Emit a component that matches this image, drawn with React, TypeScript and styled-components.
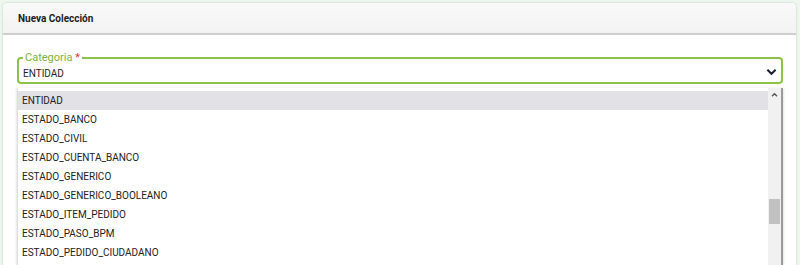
import styled, { createGlobalStyle } from 'styled-components';

const items = [
  'ENTIDAD',
  'ESTADO_BANCO',
  'ESTADO_CIVIL',
  'ESTADO_CUENTA_BANCO',
  'ESTADO_GENERICO',
  'ESTADO_GENERICO_BOOLEANO',
  'ESTADO_ITEM_PEDIDO',
  'ESTADO_PASO_BPM',
  'ESTADO_PEDIDO_CIUDADANO',
];

const App: React.FC = () => {
  return (
    <>
      <GlobalStyle />
      <Page>
        <Card>
          <Header>Nueva Colección</Header>
          <Body>
            <Field>
              <Legend>
                Categoria <Required>*</Required>
              </Legend>
              <Value>ENTIDAD</Value>
              <Chevron viewBox="0 0 12 8">
                <path d="M1.5 1.5 L6 6 L10.5 1.5" />
              </Chevron>
            </Field>
            <Menu>
              <Options>
                {items.map((item, i) => (
                  <Option key={item} selected={i === 0}>
                    {item}
                  </Option>
                ))}
              </Options>
              <Scrollbar>
                <ArrowUp viewBox="0 0 8 6">
                  <path d="M1 5 L4 2 L7 5" />
                </ArrowUp>
                <Thumb />
              </Scrollbar>
            </Menu>
          </Body>
        </Card>
      </Page>
    </>
  );
};

export default App;

const GlobalStyle = createGlobalStyle`
  html, body {
    margin: 0;
    padding: 0;
    background: #eef7ee;
    font-family: Roboto, "Liberation Sans", sans-serif;
  }
`;

const Page = styled.div`
  height: 265px;
  padding: 3px 4px 0 3px;
  box-sizing: border-box;
  overflow: hidden;
`;

const Card = styled.div`
  background: #ffffff;
  border-radius: 4px 4px 0 0;
  box-shadow: 0 0 2px rgba(0, 0, 0, 0.25);
  height: 262px;
  overflow: hidden;
  display: flex;
  flex-direction: column;
`;

const Header = styled.div`
  height: 30px;
  flex: none;
  display: flex;
  align-items: center;
  padding-left: 15px;
  background: linear-gradient(#f9f9f9, #f3f3f3);
  border-bottom: 2px solid #cfcfcf;
  font-size: 10px;
  font-weight: 700;
  color: #1c1c1c;
`;

const Body = styled.div`
  flex: 1;
  padding: 22px 13px 0 14px;
  display: flex;
  flex-direction: column;
`;

const Field = styled.div`
  position: relative;
  height: 27px;
  flex: none;
  border: 2px solid #8bc34a;
  border-radius: 4px;
  display: flex;
  align-items: center;
  padding: 0 4px 0 4px;
  box-sizing: border-box;
`;

const Legend = styled.span`
  position: absolute;
  top: -8px;
  left: 4px;
  padding: 0 2px;
  background: #ffffff;
  font-size: 11px;
  line-height: 14px;
  color: #7cb342;
`;

const Required = styled.span`
  color: #e53935;
`;

const Value = styled.span`
  flex: 1;
  font-size: 10px;
  color: #1f1f1f;
  padding-top: 5px;
`;

const Chevron = styled.svg`
  width: 11px;
  height: 8px;
  fill: none;
  stroke: #1a2330;
  stroke-width: 2.2;
  margin-top: 2px;
`;

const Menu = styled.div`
  margin-top: 4px;
  flex: 1;
  display: flex;
  background: #ffffff;
  border-left: 1px solid #dedede;
  border-right: 2px solid #9a9a9a;
  box-shadow: 0 1px 3px rgba(0, 0, 0, 0.2);
  overflow: hidden;
`;

const Options = styled.div`
  flex: 1;
  padding-top: 3px;
`;

const Option = styled.div<{ selected?: boolean }>`
  height: 19px;
  line-height: 19px;
  padding-left: 4px;
  font-size: 10px;
  color: #222222;
  background: ${(p) => (p.selected ? '#e1e1e6' : '#ffffff')};
`;

const Scrollbar = styled.div`
  width: 13px;
  flex: none;
  position: relative;
  background: #f1f1f1;
`;

const ArrowUp = styled.svg`
  position: absolute;
  top: 4px;
  left: 3px;
  width: 7px;
  height: 5px;
  fill: none;
  stroke: #505050;
  stroke-width: 1.6;
`;

const Thumb = styled.div`
  position: absolute;
  top: 111px;
  left: 1px;
  width: 11px;
  height: 25px;
  background: #c1c1c1;
`;
